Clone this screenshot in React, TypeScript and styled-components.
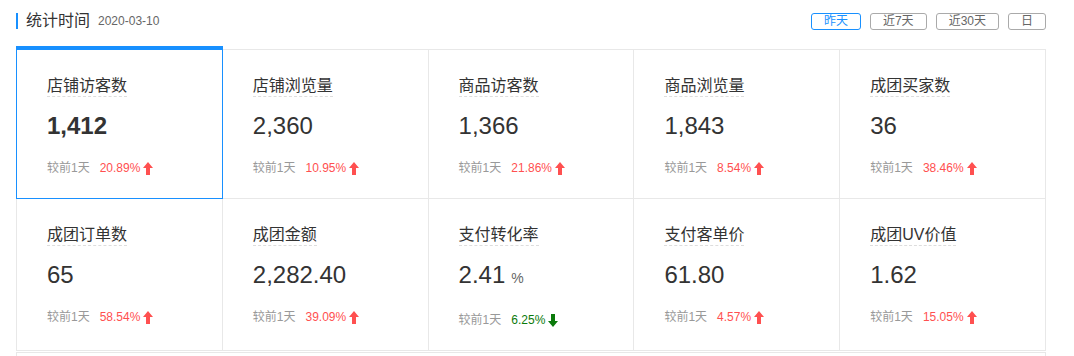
import styled, { createGlobalStyle } from 'styled-components';

type Stat = {
	label: string;
	value: string;
	unit?: string;
	rate: string;
	up: boolean;
};

const stats: Stat[] = [
	{ label: '店铺访客数', value: '1,412', rate: '20.89%', up: true },
	{ label: '店铺浏览量', value: '2,360', rate: '10.95%', up: true },
	{ label: '商品访客数', value: '1,366', rate: '21.86%', up: true },
	{ label: '商品浏览量', value: '1,843', rate: '8.54%', up: true },
	{ label: '成团买家数', value: '36', rate: '38.46%', up: true },
	{ label: '成团订单数', value: '65', rate: '58.54%', up: true },
	{ label: '成团金额', value: '2,282.40', rate: '39.09%', up: true },
	{ label: '支付转化率', value: '2.41', unit: '%', rate: '6.25%', up: false },
	{ label: '支付客单价', value: '61.80', rate: '4.57%', up: true },
	{ label: '成团UV价值', value: '1.62', rate: '15.05%', up: true },
];

const ranges = ['昨天', '近7天', '近30天', '日'];

const GlobalStyle = createGlobalStyle`
	body {
		margin: 0;
		background: #fff;
		font-family: 'Liberation Sans', 'Noto Sans CJK SC', sans-serif;
		color: #333;
	}
`;

export default function App() {
	return (
		<>
			<GlobalStyle />
			<Page>
				<Header>
					<Title>统计时间</Title>
					<DateText>2020-03-10</DateText>
					<RangeGroup>
						{ranges.map((r, i) => (
							<RangeBtn key={r} active={i === 0}>
								{r}
							</RangeBtn>
						))}
					</RangeGroup>
				</Header>
				<Grid>
					{stats.map((s, i) => (
						<Cell key={s.label} selected={i === 0}>
							<Label>{s.label}</Label>
							<Value bold={i === 0}>
								{s.value}
								{s.unit && <Unit>{s.unit}</Unit>}
							</Value>
							<Compare>
								较前1天
								<Rate up={s.up}>
									{s.rate}
									<Arrow up={s.up} />
								</Rate>
							</Compare>
						</Cell>
					))}
				</Grid>
				<Panel />
			</Page>
		</>
	);
}

function Arrow({ up }: { up: boolean }) {
	return (
		<ArrowSvg viewBox='0 0 10 13' width='10' height='13'>
			<polygon
				points={
					up
						? '5,0 10,6 7,6 7,13 3,13 3,6 0,6'
						: '5,13 10,7 7,7 7,0 3,0 3,7 0,7'
				}
				fill={up ? '#ff5050' : '#0b7a0b'}
			/>
		</ArrowSvg>
	);
}

const Page = styled.div`
	padding: 11px 28px 0 16px;
`;

const Header = styled.div`
	display: flex;
	align-items: center;
	height: 20px;
`;

const Title = styled.span`
	border-left: 2px solid #1890ff;
	padding-left: 8px;
	height: 16px;
	line-height: 16px;
	font-size: 16px;
	color: #333;
`;

const DateText = styled.span`
	margin-left: 8px;
	font-size: 12px;
	color: #666;
`;

const RangeGroup = styled.div`
	margin-left: auto;
	display: flex;
	gap: 9px;
`;

const RangeBtn = styled.button<{ active: boolean }>`
	box-sizing: border-box;
	height: 17px;
	padding: 0 12px;
	font-family: inherit;
	font-size: 12px;
	line-height: 15px;
	background: #fff;
	border: 1px solid ${({ active }) => (active ? '#1890ff' : '#aaa')};
	color: ${({ active }) => (active ? '#1890ff' : '#666')};
	border-radius: 3px;
	cursor: pointer;
`;

const Grid = styled.div`
	margin-top: 18px;
	display: grid;
	grid-template-columns: repeat(5, 1fr);
	border-top: 1px solid #e8e8e8;
	border-left: 1px solid #e8e8e8;
`;

const Cell = styled.div<{ selected: boolean }>`
	position: relative;
	display: flex;
	flex-direction: column;
	align-items: flex-start;
	padding: 26px 30px 22px;
	border-right: 1px solid #e8e8e8;
	border-bottom: 1px solid #e8e8e8;
	${({ selected }) =>
		selected &&
		`
		&::after {
			content: '';
			position: absolute;
			top: -4px;
			left: -1px;
			right: -1px;
			bottom: -1px;
			border: 1px solid #1890ff;
			border-top: 4px solid #1890ff;
			pointer-events: none;
		}
	`}
`;

const Label = styled.span`
	font-size: 16px;
	line-height: 20px;
	color: #333;
	border-bottom: 1px dashed #ddd;
`;

const Value = styled.div<{ bold: boolean }>`
	margin-top: 13px;
	font-size: 24px;
	line-height: 32px;
	font-weight: ${({ bold }) => (bold ? 700 : 400)};
	color: #333;
`;

const Unit = styled.span`
	margin-left: 6px;
	font-size: 14px;
	color: #666;
`;

const Compare = styled.div`
	margin-top: 18px;
	display: flex;
	align-items: center;
	font-size: 12px;
	line-height: 16px;
	color: #999;
`;

const Rate = styled.span<{ up: boolean }>`
	display: inline-flex;
	align-items: center;
	gap: 3px;
	margin-left: 10px;
	color: ${({ up }) => (up ? '#ff5050' : '#0b7a0b')};
`;

const ArrowSvg = styled.svg`
	display: block;
`;

const Panel = styled.div`
	height: 40px;
	margin-top: 1px;
	border: 1px solid #e8e8e8;
`;
